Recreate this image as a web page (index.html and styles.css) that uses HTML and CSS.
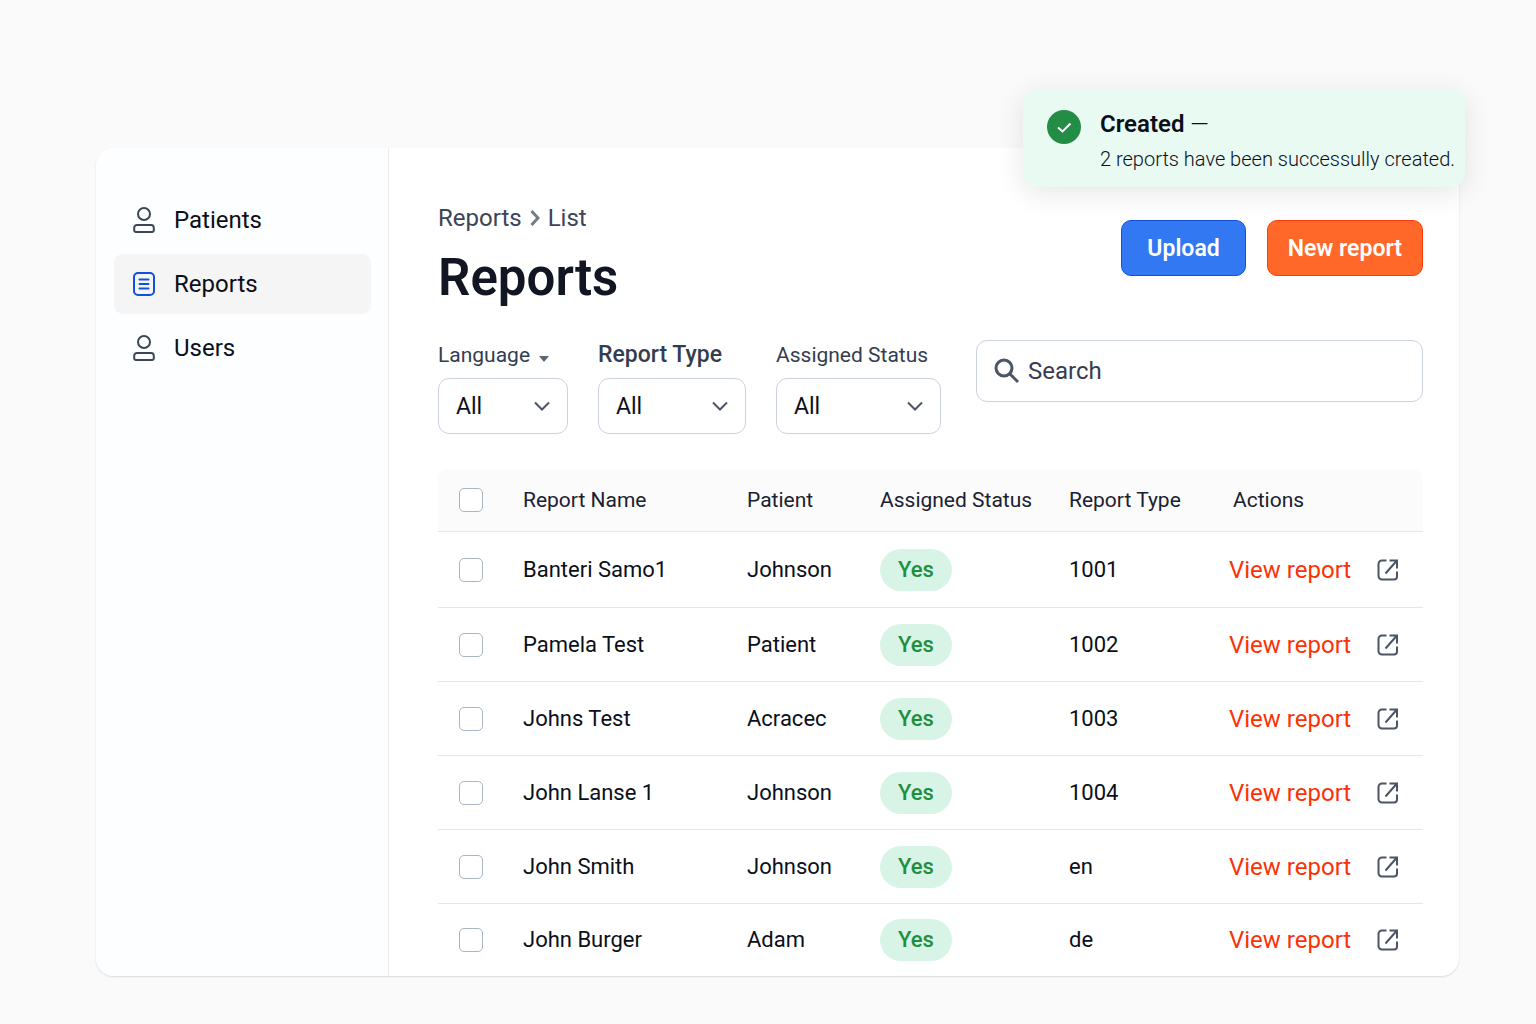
FILE: index.html
```html
<!DOCTYPE html>
<html lang="en">
<head>
    <meta charset="UTF-8">
    <meta name="viewport" content="width=device-width, initial-scale=1.0">
    <title>Reports</title>
    <link rel="stylesheet" href="styles.css">
</head>
<body>

<!-- Shared icons -->
<svg class="icon-defs" aria-hidden="true">
    <symbol id="icon-user" viewBox="0 0 24 28">
        <circle cx="12" cy="8" r="6"/>
        <path d="M5 19h14a2.800 2.800 0 0 1 2.800 2.800v2.500a1.700 1.700 0 0 1-1.700 1.700H3.900a1.700 1.700 0 0 1-1.700-1.700v-2.500A2.800 2.800 0 0 1 5 19z"/>
    </symbol>
    <symbol id="icon-chevron" viewBox="0 0 18 12">
        <path d="M2 2.500l7 7 7-7"/>
    </symbol>
    <symbol id="icon-external" viewBox="0 0 24 24">
        <path d="M10.500 2.500H6A3.500 3.500 0 0 0 2.500 6v12A3.500 3.500 0 0 0 6 21.500h12a3 3 0 0 0 3-3V13.500"/>
        <path d="M13.500 2.500H21V10.500M20.500 3L9.500 15.500"/>
    </symbol>
</svg>

<div class="app">
    <nav class="sidebar">
        <a href="#patients">
            <svg class="nav-icon"><use href="#icon-user"/></svg>
            Patients
        </a>
        <a href="#reports" class="active">
            <svg class="nav-icon" viewBox="0 0 24 28">
                <rect x="2" y="3" width="20" height="22" rx="4"/>
                <path d="M7.500 9.500h9M7.500 14h9M7.500 18.500h9"/>
            </svg>
            Reports
        </a>
        <a href="#users">
            <svg class="nav-icon"><use href="#icon-user"/></svg>
            Users
        </a>
    </nav>

    <main class="content">
        <div class="page-header">
            <div>
                <div class="breadcrumb">
                    <a href="#reports">Reports</a>
                    <svg viewBox="0 0 10 18"><path d="M1.500 2l6.500 7-6.500 7"/></svg>
                    <span>List</span>
                </div>
                <h1>Reports</h1>
            </div>
            <div class="buttons">
                <button class="btn btn-upload">Upload</button>
                <button class="btn btn-new">New report</button>
            </div>
        </div>

        <!-- Filters -->
        <div class="filters">
            <div class="filter filter-language">
                <label for="language">Language <svg class="caret" viewBox="0 0 10 6"><path d="M0 0h10L5 6z"/></svg></label>
                <div class="select-box">
                    <select id="language"><option>All</option></select>
                    <svg class="chevron"><use href="#icon-chevron"/></svg>
                </div>
            </div>
            <div class="filter filter-type">
                <label for="report-type">Report Type</label>
                <div class="select-box">
                    <select id="report-type"><option>All</option></select>
                    <svg class="chevron"><use href="#icon-chevron"/></svg>
                </div>
            </div>
            <div class="filter filter-status">
                <label for="status">Assigned Status</label>
                <div class="select-box">
                    <select id="status"><option>All</option></select>
                    <svg class="chevron"><use href="#icon-chevron"/></svg>
                </div>
            </div>
            <label class="search">
                <svg viewBox="0 0 26 26"><circle cx="10" cy="10" r="8"/><path d="M16 16l8 8"/></svg>
                <input type="text" placeholder="Search" aria-label="Search">
            </label>
        </div>

        <!-- Reports table -->
        <table class="report-table">
            <thead>
            <tr>
                <th class="col-check"><input type="checkbox" aria-label="Select all"></th>
                <th>Report Name</th>
                <th class="col-patient">Patient</th>
                <th class="col-status">Assigned Status</th>
                <th class="col-type">Report Type</th>
                <th class="col-actions">Actions</th>
            </tr>
            </thead>
            <tbody>
            <tr>
                <td><input type="checkbox" aria-label="Select Banteri Samo1"></td>
                <td>Banteri Samo1</td>
                <td>Johnson</td>
                <td><span class="badge">Yes</span></td>
                <td>1001</td>
                <td><a href="#1001" class="view">View report <svg><use href="#icon-external"/></svg></a></td>
            </tr>
            <tr>
                <td><input type="checkbox" aria-label="Select Pamela Test"></td>
                <td>Pamela Test</td>
                <td>Patient</td>
                <td><span class="badge">Yes</span></td>
                <td>1002</td>
                <td><a href="#1002" class="view">View report <svg><use href="#icon-external"/></svg></a></td>
            </tr>
            <tr>
                <td><input type="checkbox" aria-label="Select Johns Test"></td>
                <td>Johns Test</td>
                <td>Acracec</td>
                <td><span class="badge">Yes</span></td>
                <td>1003</td>
                <td><a href="#1003" class="view">View report <svg><use href="#icon-external"/></svg></a></td>
            </tr>
            <tr>
                <td><input type="checkbox" aria-label="Select John Lanse 1"></td>
                <td>John Lanse 1</td>
                <td>Johnson</td>
                <td><span class="badge">Yes</span></td>
                <td>1004</td>
                <td><a href="#1004" class="view">View report <svg><use href="#icon-external"/></svg></a></td>
            </tr>
            <tr>
                <td><input type="checkbox" aria-label="Select John Smith"></td>
                <td>John Smith</td>
                <td>Johnson</td>
                <td><span class="badge">Yes</span></td>
                <td>en</td>
                <td><a href="#en" class="view">View report <svg><use href="#icon-external"/></svg></a></td>
            </tr>
            <tr>
                <td><input type="checkbox" aria-label="Select John Burger"></td>
                <td>John Burger</td>
                <td>Adam</td>
                <td><span class="badge">Yes</span></td>
                <td>de</td>
                <td><a href="#de" class="view">View report <svg><use href="#icon-external"/></svg></a></td>
            </tr>
            </tbody>
        </table>
    </main>
</div>

<!-- Notification -->
<div class="toast" role="status">
    <svg class="toast-icon" viewBox="0 0 34 34">
        <circle cx="17" cy="17" r="17"/>
        <path d="M11 17.500l4.500 4 8-8"/>
    </svg>
    <div>
        <p class="toast-title"><strong>Created</strong> —</p>
        <p class="toast-text">2 reports have been successully created.</p>
    </div>
</div>

</body>
</html>
```
FILE: styles.css
```css
* {
    box-sizing: border-box;
}
body {
    font-family: Roboto, "Liberation Sans", sans-serif;
    font-size: 21px;
    line-height: 28px;
    margin: 0;
    padding: 148px 77px 48px 96px;
    background-color: #fafafa;
    color: #0b0f19;
}
svg {
    fill: none;
    stroke: currentColor;
    stroke-width: 2;
    flex-shrink: 0;
}
.icon-defs {
    display: none;
}
.app {
    display: flex;
    background-color: #ffffff;
    border-radius: 18px;
    box-shadow: 0 1px 2px rgba(20, 30, 50, 0.14);
}
.sidebar {
    width: 293px;
    flex-shrink: 0;
    display: flex;
    flex-direction: column;
    gap: 4px;
    padding: 42px 17px 42px 18px;
    background-color: #fdfeff;
    border-right: 1px solid #ebecef;
    border-radius: 18px 0 0 18px;
}
.sidebar a {
    display: flex;
    align-items: center;
    gap: 18px;
    height: 60px;
    padding: 0 18px;
    border-radius: 9px;
    color: #0b0f19;
    font-size: 24px;
    text-decoration: none;
}
.sidebar a.active {
    background-color: #f5f5f5;
}
.nav-icon {
    width: 24px;
    height: 28px;
    color: #3c4657;
}
.active .nav-icon {
    color: #1150e0;
    stroke-linecap: round;
}
.content {
    flex: 1;
    min-width: 0;
    padding: 56px 36px 0 49px;
}
.page-header {
    display: flex;
    justify-content: space-between;
    margin-bottom: 32px;
}
.breadcrumb {
    display: flex;
    align-items: center;
    gap: 8px;
    font-size: 24px;
    color: #3b4558;
}
.breadcrumb a {
    color: inherit;
    text-decoration: none;
}
.breadcrumb svg {
    width: 10px;
    height: 18px;
    stroke: #747c88;
    stroke-width: 3;
}
h1 {
    margin: 16px 0 0;
    font-size: 51px;
    line-height: 60px;
    font-weight: 600;
    color: #111622;
}
.buttons {
    display: flex;
    align-items: flex-start;
    gap: 21px;
    padding-top: 16px;
}
.btn {
    height: 56px;
    padding: 0 20px;
    border: 1px solid;
    border-radius: 10px;
    font-family: inherit;
    font-size: 23px;
    font-weight: 600;
    color: #ffffff;
    cursor: pointer;
}
.btn-upload {
    padding: 0 25px;
    background-color: #3178f2;
    border-color: #1250d8;
}
.btn-new {
    background-color: #ff6829;
    border-color: #ff3a0c;
}
.filters {
    display: flex;
    align-items: flex-start;
    gap: 30px;
    margin-bottom: 35px;
}
.filter label {
    display: block;
    padding-top: 1px;
    margin-bottom: 9px;
    color: #343d4f;
    white-space: nowrap;
}
.filter-language {
    width: 130px;
}
.filter-type {
    width: 148px;
}
.filter-type label {
    font-size: 23px;
    font-weight: 500;
}
.filter-status {
    width: 165px;
}
.caret {
    width: 10px;
    height: 6px;
    margin-left: 4px;
    fill: #5d6675;
    stroke: none;
}
.select-box {
    position: relative;
}
.select-box select {
    appearance: none;
    display: block;
    width: 100%;
    height: 56px;
    padding: 0 17px;
    border: 1px solid #ccd3df;
    border-radius: 11px;
    background-color: #ffffff;
    font-family: inherit;
    font-size: 23px;
    color: #0b0f19;
}
.chevron {
    position: absolute;
    top: 22px;
    right: 17px;
    width: 18px;
    height: 12px;
    color: #4b5565;
    pointer-events: none;
}
.search {
    flex: 1;
    display: flex;
    align-items: center;
    gap: 8px;
    height: 62px;
    margin-left: 5px;
    padding: 0 17px;
    border: 1px solid #ccd3df;
    border-radius: 11px;
    color: #4b5565;
}
.search svg {
    width: 26px;
    height: 26px;
    stroke-width: 3;
}
.search input {
    flex: 1;
    min-width: 0;
    padding: 0;
    border: none;
    outline: none;
    background: none;
    font-family: inherit;
    font-size: 24px;
}
.search input::placeholder {
    color: #343d4f;
    opacity: 1;
}
.report-table {
    width: 100%;
    table-layout: fixed;
    border-collapse: separate;
    border-spacing: 0;
}
.report-table th,
.report-table td {
    padding: 0;
    text-align: left;
    border-bottom: 1px solid #e3e6ea;
    white-space: nowrap;
}
.report-table th {
    height: 63px;
    background-color: #fbfbfc;
    font-weight: 400;
    color: #1a2130;
}
.report-table td {
    height: 74px;
    font-size: 22px;
}
.report-table tbody tr:first-child td {
    height: 76px;
}
.report-table tbody tr:last-child td {
    height: 72px;
    border-bottom: none;
}
.report-table th:first-child {
    border-top-left-radius: 9px;
}
.report-table th:last-child {
    border-top-right-radius: 9px;
}
.report-table th:first-child,
.report-table td:first-child {
    padding-left: 21px;
}
.col-check {
    width: 85px;
}
.col-patient {
    width: 133px;
}
.col-status {
    width: 189px;
}
.col-type {
    width: 160px;
}
.report-table th.col-actions {
    width: 194px;
    padding-left: 4px;
}
input[type="checkbox"] {
    appearance: none;
    display: block;
    width: 24px;
    height: 24px;
    margin: 0;
    border: 1px solid #aab4c3;
    border-radius: 5px;
    background-color: #ffffff;
}
.badge {
    display: inline-block;
    padding: 7px 18px;
    border-radius: 21px;
    background-color: #d7f4e7;
    color: #1f8f3f;
    font-weight: 500;
}
.view {
    display: flex;
    align-items: center;
    justify-content: space-between;
    padding-right: 23px;
    font-size: 24px;
    color: #fb3206;
    text-decoration: none;
}
.view svg {
    width: 24px;
    height: 24px;
    color: #4b5565;
}
.toast {
    position: absolute;
    top: 89px;
    right: 71px;
    width: 442px;
    height: 98px;
    display: flex;
    gap: 19px;
    padding: 21px 12px 0 24px;
    border-radius: 14px;
    background-color: #e9faf3;
    box-shadow: 0 6px 28px rgba(0, 0, 0, 0.1);
}
.toast-icon {
    width: 34px;
    height: 34px;
    fill: #238c45;
    stroke: none;
}
.toast-icon path {
    fill: none;
    stroke: #ffffff;
    stroke-width: 2;
}
.toast p {
    margin: 0;
    white-space: nowrap;
}
.toast .toast-title {
    font-size: 24px;
    font-weight: 300;
}
.toast-title strong {
    font-weight: 600;
}
.toast .toast-text {
    margin-top: 7px;
    font-size: 20px;
    font-weight: 300;
}
```
